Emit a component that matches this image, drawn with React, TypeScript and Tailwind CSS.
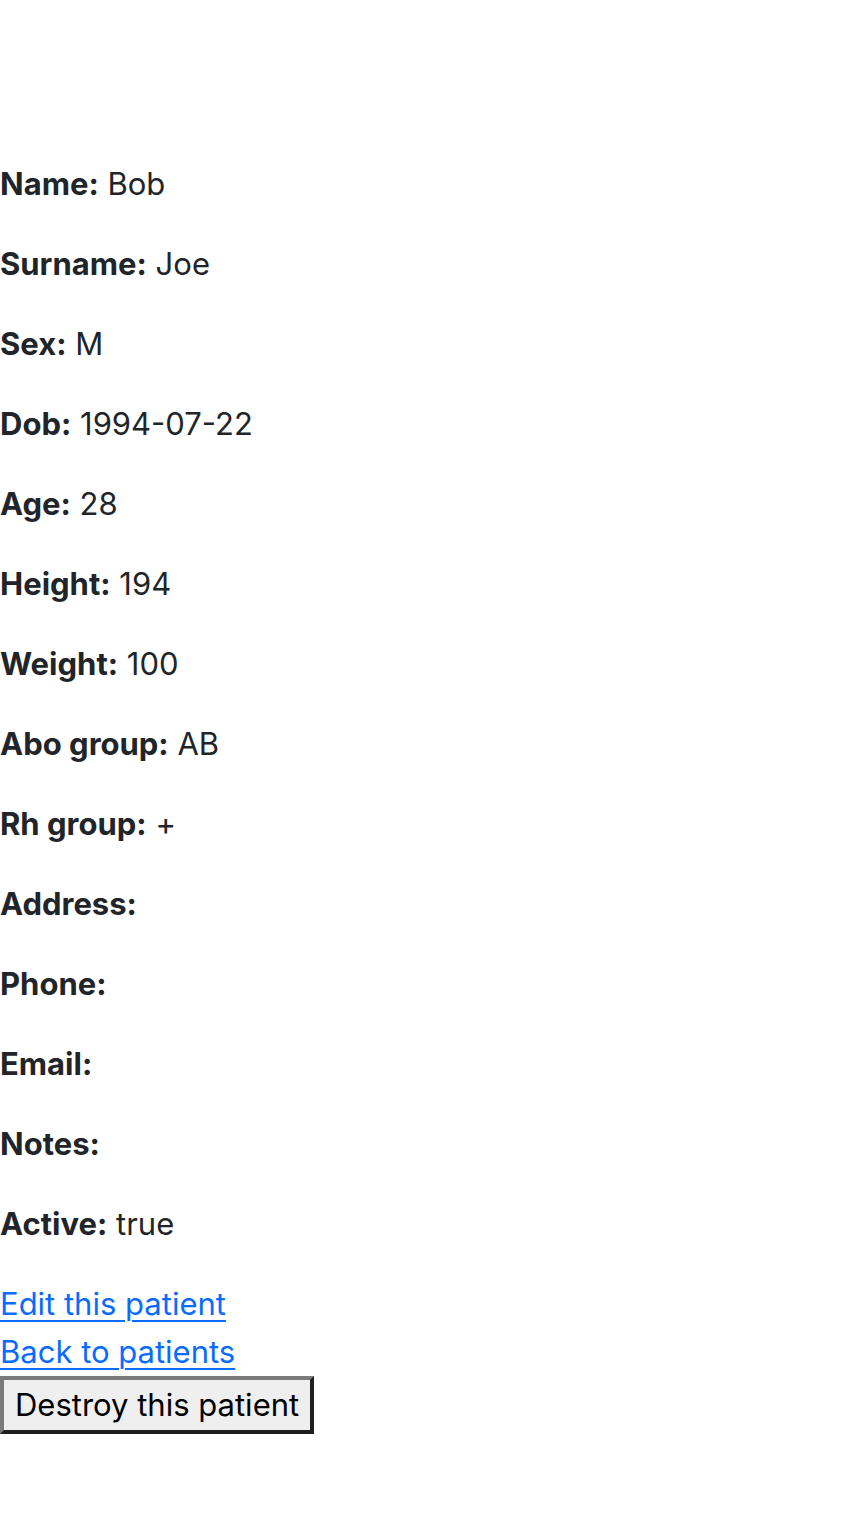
const fields: [string, string][] = [
  ['Name', 'Bob'],
  ['Surname', 'Joe'],
  ['Sex', 'M'],
  ['Dob', '1994-07-22'],
  ['Age', '28'],
  ['Height', '194'],
  ['Weight', '100'],
  ['Abo group', 'AB'],
  ['Rh group', '+'],
  ['Address', ''],
  ['Phone', ''],
  ['Email', ''],
  ['Notes', ''],
  ['Active', 'true'],
];

export default function App() {
  return (
    <div className="min-h-[1538px] bg-white pt-[160px] font-['Inter',sans-serif] text-[31px] leading-[48px] text-[#212529]">
      {/* Patient details */}
      <div>
        {fields.map(([label, value]) => (
          <p key={label} className="mb-[32px]">
            <strong className="font-bold">{label}:</strong> {value}
          </p>
        ))}
      </div>

      {/* Actions */}
      <div>
        <a href="#" className="text-[#0a6cff] underline underline-offset-[5px] decoration-2">
          Edit this patient
        </a>
        <br />
        <a href="#" className="text-[#0a6cff] underline underline-offset-[5px] decoration-2">
          Back to patients
        </a>
        <form>
          <button
            type="button"
            className="h-[58px] border-4 border-t-[#7a7a7a] border-l-[#7a7a7a] border-b-[#1f1f1f] border-r-[#1f1f1f] bg-[#efefef] px-[11px] text-[31px] leading-[48px] text-black"
          >
            Destroy this patient
          </button>
        </form>
      </div>
    </div>
  );
}
